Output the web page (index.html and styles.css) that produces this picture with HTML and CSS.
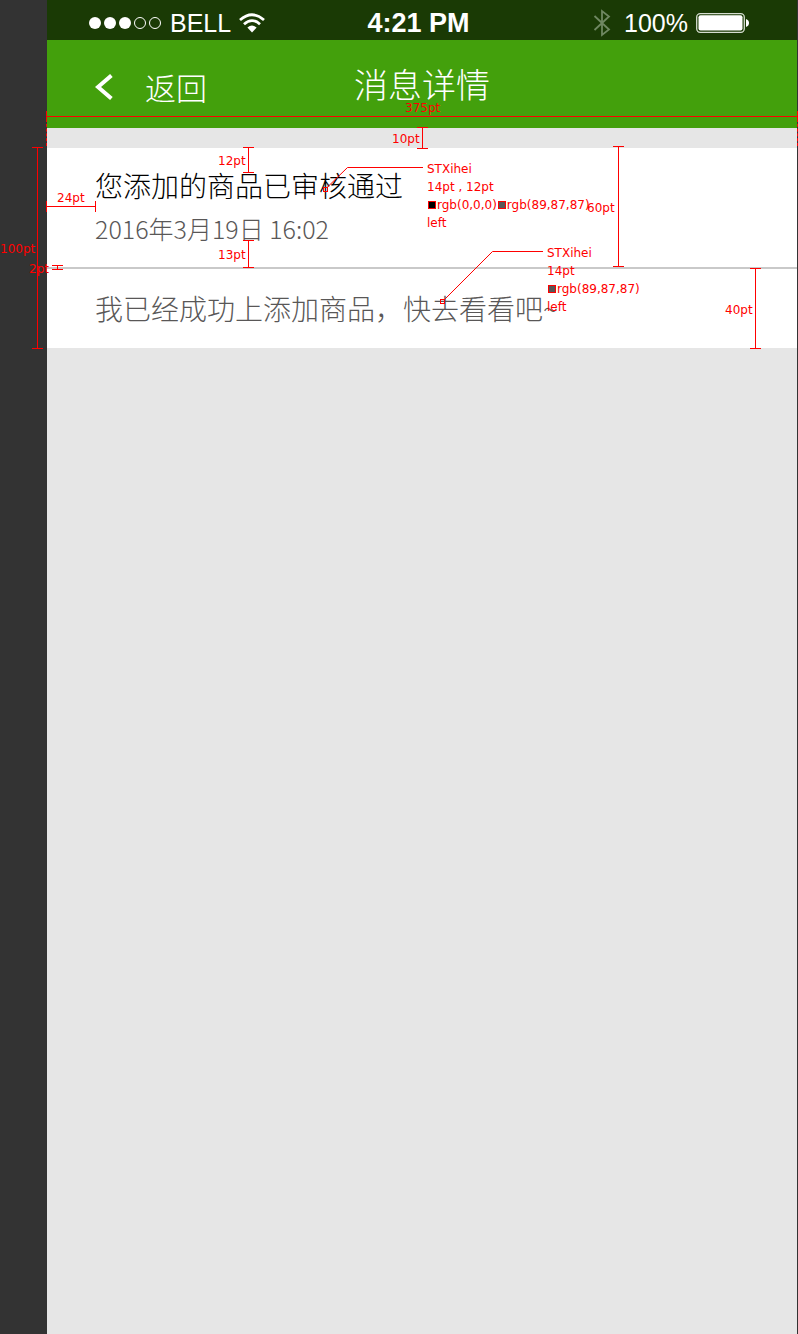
FILE: index.html
```html
<!DOCTYPE html>
<html lang="zh-CN">
<head>
<meta charset="utf-8">
<meta name="viewport" content="width=device-width, initial-scale=1">
<title>消息详情</title>
<link rel="stylesheet" href="styles.css">
</head>
<body>
<div class="board">
  <div class="screen">
    <div class="status">
      <div class="status-left">
        <svg width="74" height="14" viewBox="0 0 74 14" aria-hidden="true">
          <g fill="#fff"><circle cx="7" cy="7" r="6"/><circle cx="22" cy="7" r="6"/><circle cx="37" cy="7" r="6"/></g>
          <g fill="none" stroke="#fff"><circle cx="52" cy="7" r="5.5"/><circle cx="67" cy="7" r="5.5"/></g>
        </svg>
        <span class="carrier">BELL</span>
        <svg width="26" height="20" viewBox="0 0 26 20" aria-hidden="true">
          <g fill="none" stroke="#fff" stroke-width="2.8"><path d="M1 7Q13-3.6 25 7"/><path d="M5 11.2Q13 4 21 11.2"/></g>
          <path d="M8.4 14.6Q13 10.4 17.6 14.6L13 19.6Z" fill="#fff"/>
        </svg>
      </div>
      <span class="clock">4:21 PM</span>
      <div class="status-right">
        <svg width="18" height="28" viewBox="0 0 18 28" fill="none" stroke="#6f8762" stroke-width="1.8" aria-hidden="true"><path d="M1.5 7L16 20.5L9 26V2L16 7.5L1.5 21"/></svg>
        <div class="power">
          <span class="percent">100%</span>
          <svg width="53" height="20" viewBox="0 0 53 20" aria-hidden="true">
            <rect x=".7" y=".7" width="47.6" height="18.6" rx="3.5" fill="none" stroke="#d5ddd0" stroke-width="1.3"/>
            <rect x="2.5" y="2.2" width="44" height="15.4" rx="2" fill="#fff"/>
            <path d="M50 6Q53 7.2 53 10T50 14Z" fill="#fff"/>
          </svg>
        </div>
      </div>
    </div>
    <header class="nav">
      <button class="back" type="button">
        <svg width="18" height="26" viewBox="0 0 18 26" fill="none" stroke="#fff" stroke-width="4" aria-hidden="true"><path d="M16.4 1.5L3 13L16.4 24.5"/></svg>
        <span>返回</span>
      </button>
      <h1 class="title">消息详情</h1>
    </header>
    <main class="content">
      <article class="message">
        <header class="message-head">
          <h2 class="subject">您添加的商品已审核通过</h2>
          <time class="date" datetime="2016-03-19T16:02">2016年3月19日 16:02</time>
        </header>
        <p class="text">我已经成功上添加商品，快去看看吧~</p>
      </article>
    </main>
  </div>

  <div class="specs">
    <div class="across across-screen"></div>
    <div class="across across-inset"></div>
    <div class="guide guide-left"></div>
    <div class="guide guide-right"></div>
    <div class="up up-gap"></div>
    <div class="up up-top"></div>
    <div class="up up-bottom"></div>
    <div class="up up-head"></div>
    <div class="up up-text"></div>
    <div class="up up-card"></div>
    <div class="up up-rule"></div>
    <svg class="leaders" width="560" height="320" viewBox="0 0 560 320" fill="none" stroke="#f00" aria-hidden="true">
      <path d="M327 187.500L347.500 167.500H423"/><rect x="323.500" y="187.500" width="4" height="4"/>
      <path d="M444 300L492.500 251.500H543"/><rect x="440.500" y="299.500" width="4" height="4"/>
    </svg>
    <span class="label label-screen">375pt</span>
    <span class="label label-gap">10pt</span>
    <span class="label label-top">12pt</span>
    <span class="label label-inset">24pt</span>
    <span class="label label-bottom">13pt</span>
    <span class="label label-head">60pt</span>
    <span class="label label-text">40pt</span>
    <span class="label label-card">100pt</span>
    <span class="label label-rule">2pt</span>
    <div class="note note-head">
      <div>STXihei</div>
      <div>14pt , 12pt</div>
      <div class="colors"><i class="swatch black"></i><span>rgb(0,0,0)</span><i class="swatch gray"></i><span>rgb(89,87,87)</span></div>
      <div>left</div>
    </div>
    <div class="note note-text">
      <div>STXihei</div>
      <div>14pt</div>
      <div class="colors"><i class="swatch gray"></i><span>rgb(89,87,87)</span></div>
      <div>left</div>
    </div>
  </div>
</div>
</body>
</html>
```
FILE: styles.css
```css
* { box-sizing: border-box; }

body {
  margin: 0;
  background: #333;
  font-family: "Noto Sans CJK SC", sans-serif;
  font-weight: 300;
}

h1, h2, p { margin: 0; font-weight: 300; }
svg { display: block; flex: none; }

.board {
  position: relative;
  display: flex;
  min-height: 100vh;
  padding: 0 1px 0 47px;
}

.screen {
  flex: 1;
  min-width: 0;
  display: flex;
  flex-direction: column;
  background: #e6e6e6;
}

/* Status bar */
.status {
  display: grid;
  grid-template-columns: 1fr auto 1fr;
  align-items: center;
  height: 40px;
  padding: 5px 48px 0 41px;
  background: #1a3a05;
  color: #fff;
  font-family: "Liberation Sans", sans-serif;
  font-weight: 400;
  line-height: 28px;
}
.status-left, .status-right, .power { display: flex; align-items: center; }
.status-left, .power { gap: 8px; }
.status-right { justify-content: flex-end; gap: 13px; }
.carrier { font-size: 25px; }
.clock { font-size: 27px; font-weight: 700; }
.percent { font-size: 25px; }

/* Navigation bar */
.nav {
  display: grid;
  grid-template-columns: 1fr auto 1fr;
  align-items: center;
  height: 88px;
  padding: 0 48px;
  background: #43a00c;
  color: #fff;
}
.back {
  justify-self: start;
  display: flex;
  align-items: center;
  gap: 32px;
  padding: 6px 0 0;
  border: 0;
  background: none;
  color: inherit;
  font: inherit;
  font-size: 31px;
  line-height: 38px;
}
.title { font-size: 34px; line-height: 44px; }

/* Message */
.content { padding-top: 20px; }
.message { background: #fff; color: #595757; }
.message-head {
  display: flex;
  flex-direction: column;
  gap: 6px;
  padding: 17px 48px 22px;
  border-bottom: 2px solid #c9c9c9;
}
.subject { color: #000; font-size: 28px; line-height: 40px; }
.date { font-size: 25px; line-height: 34px; }
.text { padding: 19px 48px 20px; font-size: 28px; line-height: 40px; }

/* Dimension marks drawn over the screen */
.specs {
  position: absolute;
  inset: 0;
  overflow: hidden;
  pointer-events: none;
  color: #f00;
  font: 400 12px/18px "DejaVu Sans", sans-serif;
}
.specs > * { position: absolute; }
.up {
  width: 11px;
  border: solid #f00;
  border-width: 1px 0;
  background: linear-gradient(#f00, #f00) center / 1px 100% no-repeat;
}
.across {
  height: 11px;
  border: solid #f00;
  border-width: 0 1px;
  background: linear-gradient(#f00, #f00) center / 100% 1px no-repeat;
}
.across-screen { left: 46px; right: 0; top: 111px; }
.across-inset { left: 46px; width: 50px; top: 201px; }
.guide { top: 119px; height: 27px; border-left: 1px dashed #f00; }
.guide-left { left: 46px; }
.guide-right { right: 0; }
.up-gap { left: 417px; top: 127px; height: 22px; }
.up-top { left: 243px; top: 147px; height: 26px; }
.up-bottom { left: 243px; top: 240px; height: 28px; }
.up-head { left: 613px; top: 146px; height: 121px; }
.up-text { left: 750px; top: 268px; height: 81px; }
.up-card { left: 32px; top: 147px; height: 202px; }
.up-rule { left: 52px; top: 265px; height: 5px; }
.leaders { left: 0; top: 0; }

.label { white-space: nowrap; }
.label-screen { left: 405px; top: 99px; }
.label-gap { left: 392px; top: 130px; }
.label-top { left: 218px; top: 152px; }
.label-inset { left: 57px; top: 189px; }
.label-bottom { left: 218px; top: 246px; }
.label-head { left: 587px; top: 199px; }
.label-text { left: 725px; top: 301px; }
.label-card { left: 0; top: 240px; }
.label-rule { left: 29px; top: 260px; }

.note { white-space: nowrap; }
.note-head { left: 427px; top: 160px; }
.note-text { left: 547px; top: 244px; }
.colors { display: flex; align-items: center; gap: 1px; padding-left: 1px; }
.swatch { width: 8px; height: 8px; border: 1px solid #f00; }
.black { background: #000; }
.gray { background: #595757; }
```
